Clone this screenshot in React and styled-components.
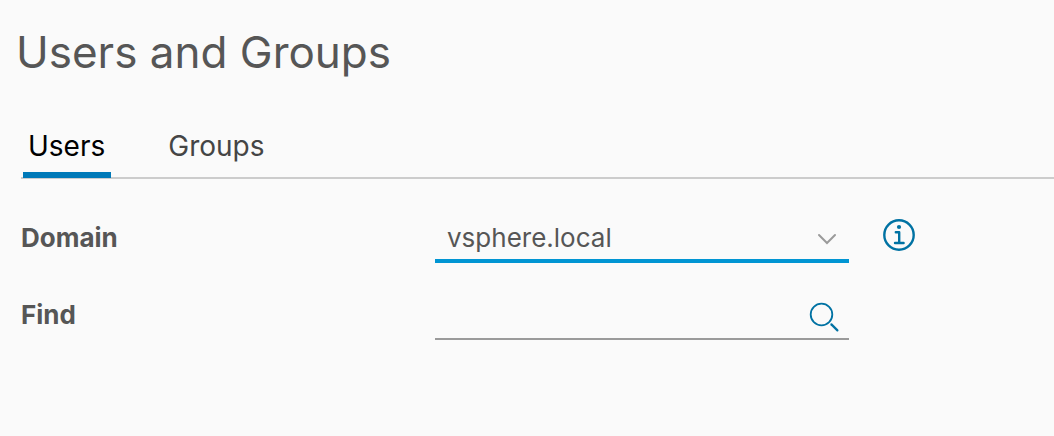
import React, { useState } from "react";
import styled, { createGlobalStyle } from "styled-components";

const GlobalStyle = createGlobalStyle`
  *, *::before, *::after { box-sizing: border-box; }
  body {
    margin: 0;
    background: #fafafa;
    color: #565656;
    font-family: Inter, "Liberation Sans", sans-serif;
  }
`;

const Page = styled.main`
  padding: 24px 0 24px 21px;
`;

const Title = styled.h1`
  margin: 0 0 32px -5px;
  font-size: 44px;
  line-height: 56px;
  font-weight: 400;
`;

const TabBar = styled.div`
  display: flex;
  gap: 52px;
  padding-left: 2px;
  height: 67px;
  border-bottom: 2px solid #cccccc;
`;

const Tab = styled.button`
  height: 66px;
  padding: 8px 6px 0 5px;
  border: 0;
  border-bottom: 6px solid ${(p) => (p.$active ? "#0079b8" : "transparent")};
  background: none;
  color: ${(p) => (p.$active ? "#000000" : "#454545")};
  font: inherit;
  font-size: 28px;
  line-height: 32px;
  cursor: pointer;
`;

const Form = styled.form`
  display: grid;
  gap: 18px;
  padding-top: 32px;
`;

const Row = styled.div`
  display: grid;
  grid-template-columns: minmax(0, 414px) minmax(0, 414px) auto;
  align-items: end;
  justify-content: start;
`;

const Label = styled.label`
  padding-bottom: 9px;
  font-size: 26px;
  line-height: 32px;
  font-weight: 650;
`;

const Field = styled.div`
  display: flex;
  align-items: center;
  height: ${(p) => (p.$active ? "52px" : "59px")};
  border-bottom: ${(p) => (p.$active ? "4px solid #0095d3" : "2px solid #9a9a9a")};
`;

const Select = styled.select`
  flex: 1;
  min-width: 0;
  height: 100%;
  padding: 4px 36px 0 12px;
  border: 0;
  outline: 0;
  appearance: none;
  background: none;
  color: #565656;
  font: inherit;
  font-size: 26px;
`;

const Chevron = styled.svg`
  width: 20px;
  height: 14px;
  margin: 8px 12px 0 -32px;
  pointer-events: none;
`;

const SearchInput = styled.input`
  flex: 1;
  min-width: 0;
  height: 100%;
  padding: 0 12px;
  border: 0;
  outline: 0;
  background: none;
  color: #565656;
  font: inherit;
  font-size: 26px;
`;

const IconButton = styled.button`
  display: grid;
  place-items: center;
  flex: none;
  width: 32px;
  height: 32px;
  padding: 0;
  border: 0;
  background: none;
  color: #0072a3;
  cursor: pointer;
`;

const SearchButton = styled(IconButton)`
  margin: 14px 9px 0 0;
`;

const InfoButton = styled(IconButton)`
  margin: 0 0 12px 34px;
`;

export default function App() {
  const [tab, setTab] = useState("Users");
  return (
    <Page>
      <GlobalStyle />
      <Title>Users and Groups</Title>
      <TabBar role="tablist">
        {["Users", "Groups"].map((name) => (
          <Tab
            key={name}
            type="button"
            role="tab"
            aria-selected={tab === name}
            $active={tab === name}
            onClick={() => setTab(name)}
          >
            {name}
          </Tab>
        ))}
      </TabBar>
      <Form onSubmit={(e) => e.preventDefault()}>
        <Row>
          <Label htmlFor="domain">Domain</Label>
          <Field $active>
            <Select id="domain">
              <option>vsphere.local</option>
            </Select>
            <Chevron viewBox="0 0 20 14" aria-hidden="true">
              <path d="M2 3l8 8 8-8" fill="none" stroke="#9a9a9a" strokeWidth="2" strokeLinecap="round" />
            </Chevron>
          </Field>
          <InfoButton type="button" aria-label="Domain information">
            <svg width="32" height="32" viewBox="0 0 32 32" fill="none" stroke="currentColor" strokeWidth="2.4">
              <circle cx="16" cy="16" r="14.7" />
              <circle cx="16" cy="8" r="2.1" fill="currentColor" stroke="none" />
              <path d="M12.8 13.2h3.4v10.8M12 24h8.6" strokeLinecap="round" strokeLinejoin="round" />
            </svg>
          </InfoButton>
        </Row>
        <Row>
          <Label htmlFor="find">Find</Label>
          <Field>
            <SearchInput id="find" type="text" />
            <SearchButton type="submit" aria-label="Search">
              <svg width="32" height="32" viewBox="0 0 32 32" fill="none" stroke="currentColor" strokeWidth="1.8">
                <circle cx="13.5" cy="13.5" r="10.8" />
                <path d="M23.4 23.4l6 6" strokeWidth="2.2" strokeLinecap="round" />
              </svg>
            </SearchButton>
          </Field>
        </Row>
      </Form>
    </Page>
  );
}
